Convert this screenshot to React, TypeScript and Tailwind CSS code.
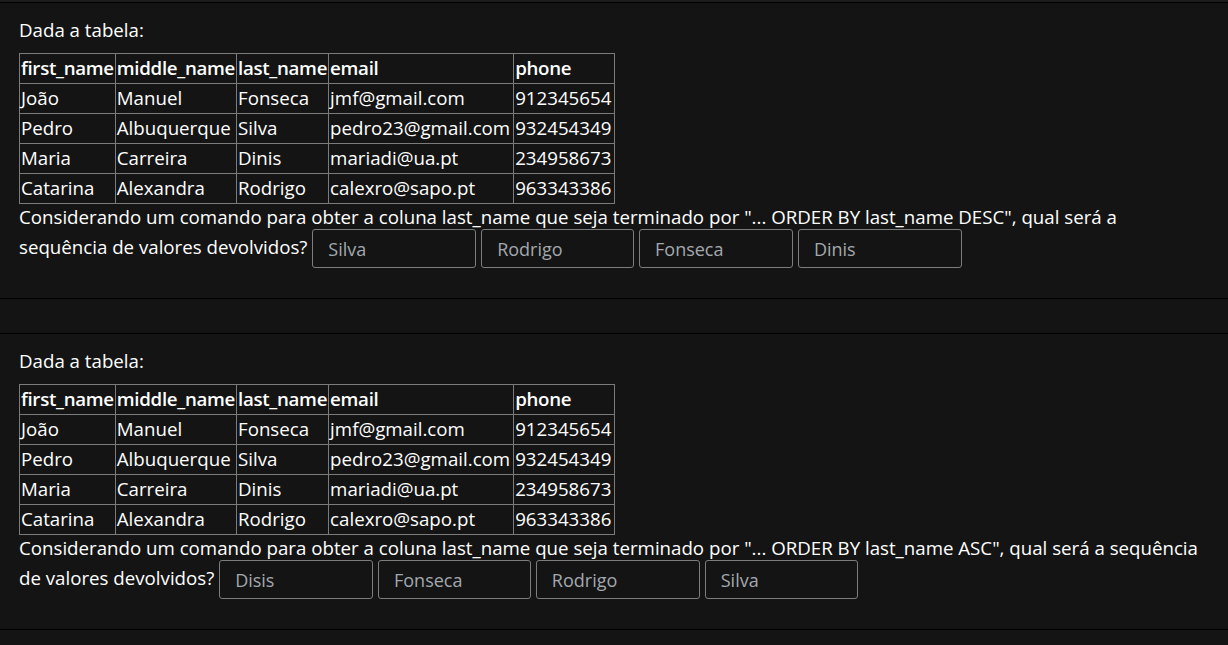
import React from "react";

interface Row {
  first: string;
  middle: string;
  last: string;
  email: string;
  phone: string;
}

const rows: Row[] = [
  { first: "João", middle: "Manuel", last: "Fonseca", email: "jmf@gmail.com", phone: "912345654" },
  { first: "Pedro", middle: "Albuquerque", last: "Silva", email: "pedro23@gmail.com", phone: "932454349" },
  { first: "Maria", middle: "Carreira", last: "Dinis", email: "mariadi@ua.pt", phone: "234958673" },
  { first: "Catarina", middle: "Alexandra", last: "Rodrigo", email: "calexro@sapo.pt", phone: "963343386" },
];

interface Question {
  order: string;
  answers: { value: string; width: string }[];
}

const questions: Question[] = [
  {
    order: "DESC",
    answers: [
      { value: "Silva", width: "w-[164px]" },
      { value: "Rodrigo", width: "w-[153px]" },
      { value: "Fonseca", width: "w-[154px]" },
      { value: "Dinis", width: "w-[164px]" },
    ],
  },
  {
    order: "ASC",
    answers: [
      { value: "Disis", width: "w-[154px]" },
      { value: "Fonseca", width: "w-[153px]" },
      { value: "Rodrigo", width: "w-[164px]" },
      { value: "Silva", width: "w-[153px]" },
    ],
  },
];

const cell = "border border-[#7b7b7b] h-[30px] whitespace-nowrap";
const head = `${cell} px-[1px] font-semibold tracking-[-0.3px]`;
const body = `${cell} pl-[1px] pr-[3px]`;

const DataTable = () => (
  <table className="border-collapse text-left">
    <thead>
      <tr>
        <th className={head}>first_name</th>
        <th className={head}>middle_name</th>
        <th className={head}>last_name</th>
        <th className={head}>email</th>
        <th className={head}>phone</th>
      </tr>
    </thead>
    <tbody>
      {rows.map((row) => (
        <tr key={row.first}>
          <td className={body}>{row.first}</td>
          <td className={body}>{row.middle}</td>
          <td className={body}>{row.last}</td>
          <td className={body}>{row.email}</td>
          <td className={body}>{row.phone}</td>
        </tr>
      ))}
    </tbody>
  </table>
);

const QuestionCard = ({ order, answers }: Question) => (
  <div className="h-[297px] border-y border-black px-[19px] pt-[12px]">
    <p className="mb-[8px] leading-[30px]">Dada a tabela:</p>
    <DataTable />
    <p className="leading-[25px]">
      Considerando um comando para obter a coluna last_name que seja terminado por "... ORDER BY last_name {order}",
      qual será a sequência de valores devolvidos?
      {answers.map((a) => (
        <React.Fragment key={a.value}>
          {" "}
          <input
            type="text"
            placeholder={a.value}
            className={`${a.width} h-[39px] rounded-[3px] border border-[#7d7d7d] bg-transparent px-[15px] align-middle text-[18px] text-white placeholder:text-[#a3a8ae] outline-none`}
          />
        </React.Fragment>
      ))}
    </p>
  </div>
);

const App = () => (
  <div
    className="min-h-screen bg-[#141414] text-[18.7px] text-white"
    style={{ fontFamily: '"Open Sans", "Noto Sans", sans-serif' }}
  >
    <div className="h-[2px] bg-[#1c1c1c]" />
    <QuestionCard {...questions[0]} />
    <div className="h-[34px]" />
    <QuestionCard {...questions[1]} />
  </div>
);

export default App;
